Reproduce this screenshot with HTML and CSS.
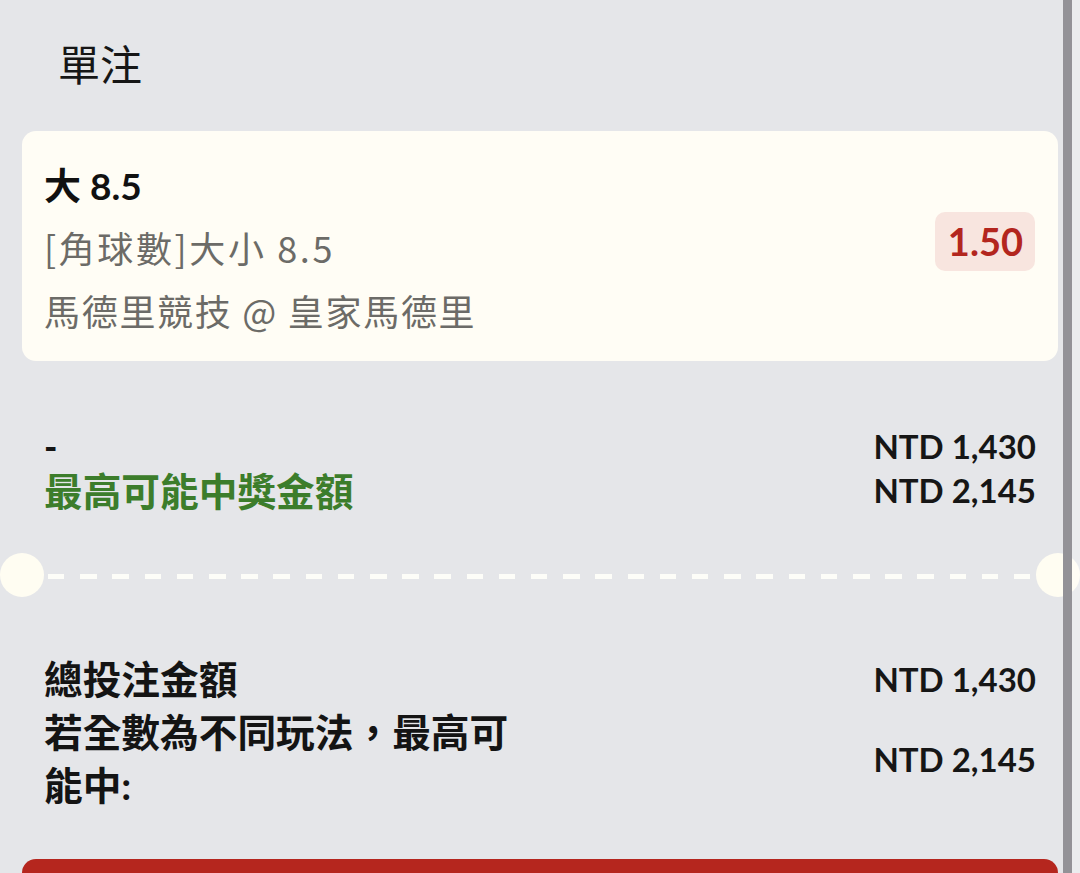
FILE: index.html
```html
<!DOCTYPE html>
<html lang="zh-Hant">
<head>
<meta charset="utf-8">
<title>單注</title>
<link rel="stylesheet" href="styles.css">
</head>
<body>
<div class="sheet">
  <h1 class="title">單注</h1>

  <div class="card">
    <div class="card-info">
      <div class="pick">大 8.5</div>
      <div class="market">[角球數]大小 8.5</div>
      <div class="match">馬德里競技 @ 皇家馬德里</div>
    </div>
    <div class="odds">1.50</div>
  </div>

  <div class="summary">
    <div class="col-left">
      <div class="dash">-</div>
      <div class="win-label">最高可能中獎金額</div>
    </div>
    <div class="col-right">
      <div class="amount">NTD 1,430</div>
      <div class="amount">NTD 2,145</div>
    </div>
  </div>

  <div class="divider">
    <span class="notch"></span>
    <span class="dashes"></span>
    <span class="notch"></span>
  </div>

  <div class="totals">
    <div class="row">
      <div class="label">總投注金額</div>
      <div class="amount">NTD 1,430</div>
    </div>
    <div class="row">
      <div class="label label-wrap">若全數為不同玩法，最高可能中:</div>
      <div class="amount">NTD 2,145</div>
    </div>
  </div>

  <button class="place">確認投注</button>
</div>
<div class="scrollbar"></div>
</body>
</html>
```

FILE: styles.css
```css
html, body {
  margin: 0;
  padding: 0;
  overflow: hidden;
  background: #e5e6e9;
}

body {
  font-family: Lato, "Noto Sans CJK TC", sans-serif;
  color: #141414;
  width: 1080px;
  height: 873px;
  position: relative;
}

.sheet {
  display: flex;
  flex-direction: column;
}

.title {
  margin: 0;
  padding: 35px 0 0 58px;
  font-size: 42px;
  line-height: 60px;
  font-weight: 400;
  color: #161616;
}

.card {
  margin: 36px 22px 0;
  padding: 23px 23px 17px 22px;
  background: #fffdf5;
  border-radius: 14px;
  display: flex;
  justify-content: space-between;
  align-items: center;
}

.pick {
  font-size: 37px;
  line-height: 64px;
  font-weight: 700;
  color: #111;
}

.market,
.match {
  font-family: "Noto Sans CJK TC", sans-serif;
  font-size: 36px;
  line-height: 63px;
  color: #6c6b67;
  position: relative;
  top: -2px;
}

.market {
  letter-spacing: 2.6px;
}

.match {
  letter-spacing: 1.7px;
}

.odds {
  margin-bottom: 15px;
  background: #f8e5df;
  color: #b3261e;
  font-weight: 700;
  font-size: 38px;
  line-height: 59px;
  padding: 0 12px 0 13px;
  border-radius: 10px;
}

.summary {
  margin-top: 63px;
  padding: 0 44px;
  display: flex;
  justify-content: space-between;
}

.dash {
  font-size: 36px;
  line-height: 44px;
  font-weight: 900;
}

.win-label {
  font-size: 38.7px;
  line-height: 47px;
  font-weight: 700;
  color: #3c7d2b;
}

.amount {
  font-size: 33px;
  line-height: 44px;
  font-weight: 700;
  color: #161616;
  text-align: right;
}

.divider {
  margin-top: 38px;
  height: 44px;
  display: flex;
  align-items: center;
}

.notch {
  width: 44px;
  height: 44px;
  border-radius: 50%;
  background: #fffdf2;
  flex: none;
}

.dashes {
  flex: 1;
  height: 5px;
  margin: 3px 6px 0 4px;
  background: repeating-linear-gradient(to right, #fdfdf8 0 16.5px, transparent 16.5px 32.2px);
}

.totals {
  margin-top: 55px;
  padding: 0 44px;
  display: flex;
  flex-direction: column;
}

.row {
  display: flex;
  justify-content: space-between;
  align-items: center;
}

.label {
  font-size: 38.7px;
  line-height: 54px;
  font-weight: 700;
  color: #141414;
}

.label-wrap {
  max-width: 485px;
  line-height: 53px;
}

.place {
  margin: 47px 22px 0;
  height: 160px;
  border: none;
  border-radius: 14px;
  background: #b5261e;
  color: #fff;
  font-family: Lato, "Noto Sans CJK TC", sans-serif;
  font-size: 40px;
  font-weight: 700;
}

.scrollbar {
  position: absolute;
  top: 0;
  left: 1063px;
  width: 9px;
  height: 873px;
  background: #939297;
  box-shadow: 8px 0 0 rgba(255, 255, 255, 0.25);
}
```
